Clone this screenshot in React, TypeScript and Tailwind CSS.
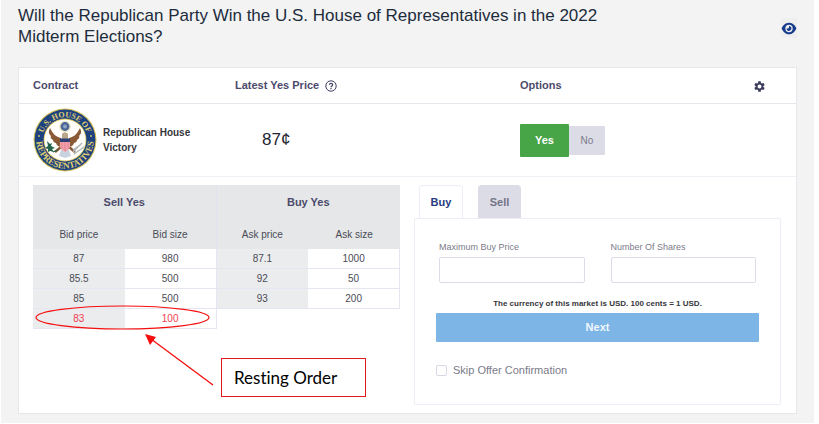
import { useState } from "react";
import { FaEye } from "react-icons/fa6";
import { MdSettings } from "react-icons/md";

type Cell = { value: string; resting?: boolean } | null;

const rows: Cell[][] = [
  [{ value: "87" }, { value: "980" }, { value: "87.1" }, { value: "1000" }],
  [{ value: "85.5" }, { value: "500" }, { value: "92" }, { value: "50" }],
  [{ value: "85" }, { value: "500" }, { value: "93" }, { value: "200" }],
  [{ value: "83", resting: true }, { value: "100", resting: true }, null, null],
];

function HouseSeal() {
  return (
    <svg viewBox="0 0 64 64" className="size-16 shrink-0" role="img" aria-label="House seal">
      <defs>
        <path id="seal-top" d="M12.6 44 A22.8 22.8 0 1 1 51.4 44" />
        <path id="seal-bottom" d="M5.2 22 A28.6 28.6 0 1 0 58.8 22" />
      </defs>
      <circle cx="32" cy="32" r="31.5" fill="#d8c45a" />
      <circle cx="32" cy="32" r="30.4" fill="#1d427f" />
      <circle cx="32" cy="32" r="21.4" fill="#d8c45a" />
      <circle cx="32" cy="32" r="20.6" fill="#fffefa" />
      <g fill="#e0d070" fontFamily="'Liberation Serif', serif" fontWeight="700" textAnchor="middle">
        <text fontSize="8">
          <textPath href="#seal-top" startOffset="50%">U.S. HOUSE OF</textPath>
        </text>
        <text fontSize="9">
          <textPath href="#seal-bottom" startOffset="50%">REPRESENTATIVES</textPath>
        </text>
      </g>
      <circle cx="6" cy="28" r="0.9" fill="#dccb68" />
      <circle cx="58" cy="28" r="0.9" fill="#dccb68" />
      <circle cx="32" cy="18.500" r="5.8" fill="#e9e3c6" />
      <circle cx="32" cy="18.500" r="4.4" fill="#4a6797" />
      <circle cx="32" cy="18.500" r="2" fill="#8fa2bf" />
      <path d="M28 30 C23 29 20 26 17 20 C15 24 16 26 18 28 C17 29 18 31 20 32 C20 34 22 35 23 35 C24 38 26 39 28 38 Z" fill="#8a5a36" />
      <path d="M36 30 C41 29 44 26 47 20 C49 24 48 26 46 28 C47 29 46 31 44 32 C44 34 42 35 41 35 C40 38 38 39 36 38 Z" fill="#8a5a36" />
      <path d="M29 26 C30 24 34 24 35 26 L35 31 L29 31 Z" fill="#b9a48c" />
      <path d="M28 39 L22 44 M36 39 L42 44" stroke="#8a5a36" strokeWidth="2.5" />
      <path d="M28 42 L32 40 L36 42 L38 48 L32 50 L26 48 Z" fill="#c9d3df" />
      <path d="M27 31 H37 V38 C37 41 34 43 32 44 C30 43 27 41 27 38 Z" fill="#f1a4ad" />
      <path d="M29 34 V41 M32 34 V43 M35 34 V41" stroke="#e5808f" strokeWidth="1" />
      <path d="M27 30.5 H37 V34 H27 Z" fill="#2d3f74" />
      <path d="M14 33 L17 36 L19 35 L18 38 L22 40 L19 41 L21 44 L17 43 L15 44 L15 41 L12 40 L15 38 Z" fill="#23634b" />
      <path d="M20 44 L25 42" stroke="#23634b" strokeWidth="1.2" />
      <path d="M40 44 L49 35 M41 46 L51 39 M40 42 L47 37" stroke="#aeb4b8" strokeWidth="1.2" />
    </svg>
  );
}

function HelpIcon() {
  return (
    <svg viewBox="0 0 12 12" className="size-3 text-[#3f3d60]" fill="none" stroke="currentColor" role="img" aria-label="Help">
      <circle cx="6" cy="6" r="5.2" strokeWidth="1" />
      <path d="M4.4 4.8 C4.4 2.9 7.7 2.9 7.7 4.8 C7.7 5.9 6 5.9 6 7.2" strokeWidth="1.2" />
      <path d="M6 8 V9.2" strokeWidth="1.2" />
    </svg>
  );
}

function OrderBook() {
  return (
    <div className="relative">
      <table className="w-full table-fixed border-separate border-spacing-0 text-center text-[10px] text-[#4b4b55]">
        <thead className="bg-[#e5e7e9]">
          <tr className="h-[35px] text-[11px] text-[#4c4a6b]">
            <th colSpan={2} className="border-r border-[#e1e2ec] p-0">Sell Yes</th>
            <th colSpan={2} className="p-0">Buy Yes</th>
          </tr>
          <tr className="h-[29px]">
            <th className="p-0 font-normal">Bid price</th>
            <th className="border-r border-[#e1e2ec] p-0 font-normal">Bid size</th>
            <th className="p-0 font-normal">Ask price</th>
            <th className="p-0 font-normal">Ask size</th>
          </tr>
        </thead>
        <tbody>
          {rows.map((row, r) => (
            <tr key={r} className="h-5">
              {row.map((cell, c) =>
                cell ? (
                  <td
                    key={c}
                    className={`border-b border-[#e6e6f0] p-0 ${c % 2 === 0 ? "bg-[#eaecee]" : "border-r bg-white"} ${cell.resting ? "text-[#f0414e]" : ""}`}
                  >
                    {cell.value}
                  </td>
                ) : (
                  <td key={c} className="p-0" />
                ),
              )}
            </tr>
          ))}
        </tbody>
      </table>
      {/* Callout over the resting order row */}
      <svg viewBox="0 0 184 84" className="absolute top-[120px] left-0 h-[84px] w-[184px]" fill="none" stroke="#f60d0d" aria-hidden="true">
        <ellipse cx="89.500" cy="12.500" rx="86.500" ry="11.500" strokeWidth="1.2" />
        <path d="M118 34 L180 80" strokeWidth="1.3" />
        <path d="M112 29 L123 32 L117 40 Z" fill="#f60d0d" stroke="none" />
      </svg>
      <div className="absolute top-[173px] left-[188px] flex h-[39px] w-[145px] items-center border border-[#e01818] bg-white pl-3 font-['Lato',sans-serif] text-[17px] text-black [font-variant-ligatures:none]">
        Resting Order
      </div>
    </div>
  );
}

function TradePanel() {
  const [tab, setTab] = useState<"buy" | "sell">("buy");
  const active = "relative z-10 -mb-px border border-b-0 border-[#ededf5] bg-white text-[#263b80]";
  const idle = "border-t border-[#dcdce6] bg-[#dcdce6] text-[#747485]";
  return (
    <div>
      <div role="tablist" className="flex gap-[15px] pl-[5px] text-[11px] font-bold">
        <button type="button" role="tab" aria-selected={tab === "buy"} onClick={() => setTab("buy")} className={`h-[33px] w-11 rounded-t-sm ${tab === "buy" ? active : idle}`}>
          Buy
        </button>
        <button type="button" role="tab" aria-selected={tab === "sell"} onClick={() => setTab("sell")} className={`h-[33px] w-[43px] rounded-t-sm ${tab === "sell" ? active : idle}`}>
          Sell
        </button>
      </div>
      <form className="rounded-xs border border-[#ededf5] px-[21px] pt-[22px] pb-[26px]" onSubmit={(e) => e.preventDefault()}>
        <div className="grid grid-cols-2 gap-[26px] px-[3px] text-[9px] leading-3 text-[#7b7b8a]">
          <label>
            Maximum Buy Price
            <input type="text" className="mt-1 block h-[26px] w-full rounded-xs border border-[#dcdce9] px-2 outline-none" />
          </label>
          <label>
            Number Of Shares
            <input type="text" className="mt-1 block h-[26px] w-full rounded-xs border border-[#dcdce9] px-2 outline-none" />
          </label>
        </div>
        <p className="mt-[15px] mb-[3px] text-center text-[8px] leading-3 font-bold text-[#36363c]">
          The currency of this market is USD. 100 cents = 1 USD.
        </p>
        <button type="submit" className="block h-[29px] w-full rounded-[1px] bg-[#7cb5e6] text-[11px] font-bold text-[#f1f7fd]">
          Next
        </button>
        <label className="mt-5 flex items-center gap-[6px] text-[11px] leading-4 text-[#7b7b8a]">
          <input type="checkbox" className="size-[11px] appearance-none rounded-xs border border-[#d9d9e6] bg-white checked:bg-[#7cb5e6]" />
          Skip Offer Confirmation
        </label>
      </form>
    </div>
  );
}

export default function App() {
  return (
    <div className="bg-white pr-[5px] pb-px pl-px font-['Liberation_Sans',Arial,sans-serif]">
      <main className="bg-[#f3f3f3] px-[17px] pt-[5px] pb-[9px]">
        <header className="flex items-start justify-between">
          <h1 className="max-w-[620px] text-[17px] leading-[21px] text-[#1d2c3c]">
            Will the Republican Party Win the U.S. House of Representatives in the 2022 Midterm Elections?
          </h1>
          <button type="button" aria-label="Watch market" className="mt-[13px] flex h-5 items-center bg-[#efefef] text-[#183c8c]">
            <FaEye className="h-[13px] w-4" />
          </button>
        </header>
        <section className="mt-5 border border-[#e6e7ea] bg-white">
          <div className="grid grid-cols-[202px_285px_1fr_auto] items-center border-b border-[#e6e7ec] pr-[30px] pl-[14px] text-[11px] leading-[35px] font-bold text-[#4c4a6b]">
            <span>Contract</span>
            <span className="flex items-center gap-[6px]">
              Latest Yes Price
              <HelpIcon />
            </span>
            <span>Options</span>
            <button type="button" aria-label="Settings" className="pt-px text-[#3b3b5c]">
              <MdSettings className="size-[13px]" />
            </button>
          </div>
          <div className="grid h-[73px] grid-cols-[202px_285px_1fr] items-center border-b border-[#f0f0f6] pl-[14px]">
            <div className="flex items-center gap-[6px]">
              <HouseSeal />
              <span className="w-24 text-[10px] leading-[15px] font-bold text-[#36363c]">Republican House Victory</span>
            </div>
            <span className="pl-[27px] text-[17px] text-[#1f2430]">87¢</span>
            <div className="flex items-center">
              <button type="button" className="h-[33px] w-[49px] rounded-[1px] bg-[#47a447] text-[11px] font-bold text-white">
                Yes
              </button>
              <button type="button" className="h-[29px] w-9 rounded-[1px] bg-[#dcdce6] text-[10px] text-[#7b7b8a]">
                No
              </button>
            </div>
          </div>
          <div className="grid grid-cols-2 items-start gap-[14px] pt-2 pr-[15px] pb-2 pl-[14px]">
            <OrderBook />
            <TradePanel />
          </div>
        </section>
      </main>
    </div>
  );
}
